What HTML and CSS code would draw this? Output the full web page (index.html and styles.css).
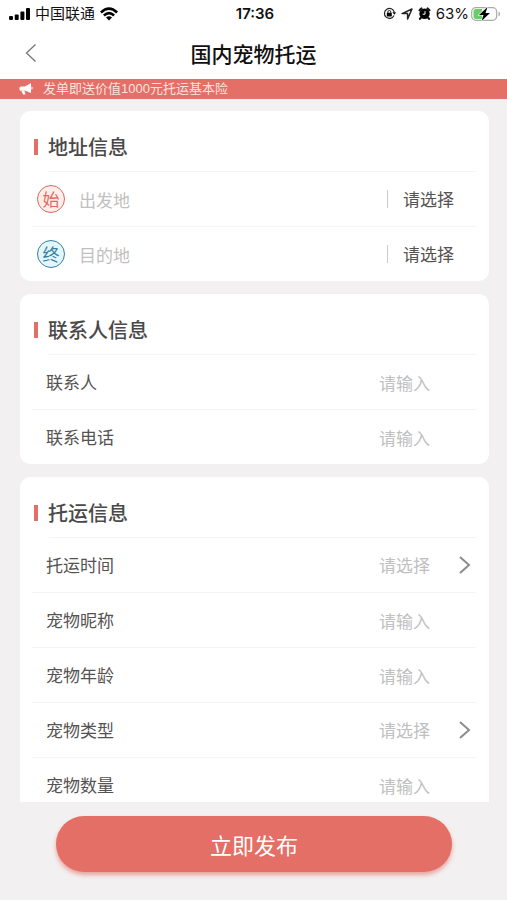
FILE: index.html
```html
<!DOCTYPE html>
<html lang="zh-CN">
<head>
<meta charset="utf-8">
<meta name="viewport" content="width=device-width, initial-scale=1">
<title>国内宠物托运</title>
<link rel="stylesheet" href="styles.css">
</head>
<body>
<header class="top">
  <div class="status">
    <div class="status-side">
      <svg class="icon" width="21" height="14" viewBox="0 0 21 14"><rect x="0" y="9" width="4" height="4" rx="1.200"/><rect x="5.700" y="7.500" width="4" height="5.500" rx="1"/><rect x="11.400" y="4.500" width="4" height="8.500" rx="1"/><rect x="17" y="1" width="4" height="12" rx="1"/></svg>
      <span class="carrier">中国联通</span>
      <svg class="icon" width="18" height="14" viewBox="0 0 18 14"><path d="M0 4.600Q9-4 18 4.600L16.200 6.400Q9-.4 1.800 6.400Z"/><path d="M3 7.600Q9 1.900 15 7.600L13.200 9.400Q9 5.600 4.800 9.400Z"/><path d="M6 10.500Q9 7.900 12 10.500L9 13.500Z"/></svg>
    </div>
    <time class="clock">17:36</time>
    <div class="status-side status-right">
      <svg class="icon" width="13" height="13" viewBox="0 0 13 13"><path d="M11 8.500a5 5 0 1 1 .3-3.300" fill="none" stroke="#222" stroke-width="1.200"/><path d="M9.400 5.300h3.600L11.500 7.800z"/><rect x="3.800" y="5.800" width="5" height="3.600" rx=".6"/><path d="M4.800 6V5a1.500 1.500 0 0 1 3 0v1" fill="none" stroke="#222"/></svg>
      <svg class="icon" width="12" height="12" viewBox="0 0 12 12"><path d="M1 5.600 11 1 6.600 11V5.600z" fill="none" stroke="#222" stroke-width="1.500" stroke-linejoin="round"/></svg>
      <svg class="icon" width="13" height="13" viewBox="0 0 13 13"><circle cx="6.500" cy="6.700" r="5.200"/><path d="M1.600 3.200 3.400 1.500M11.400 3.200 9.600 1.500M3 10.600l-1 1.200M10 10.600l1 1.200" stroke="#111" stroke-width="2.200" stroke-linecap="round"/><path d="M7 4.200v3H4.700" fill="none" stroke="#fff"/></svg>
      <span class="battery">
        <span>63%</span>
        <svg class="icon" width="30" height="16" viewBox="0 0 30 16"><rect x=".7" y="1.700" width="25" height="12.600" rx="4" fill="#fff" stroke="#aaa" stroke-width="1.200"/><path d="M5 3h6v10H5a2.500 2.500 0 0 1-2.500-2.500v-5A2.500 2.500 0 0 1 5 3z" fill="#67ce67"/><path d="M27.500 5.500c2 .8 2 4.200 0 5z" fill="#aaa"/><path d="M16.500 1 8 9h4.500L10.500 15 19 7h-4.500z" stroke="#fff" stroke-width="1.200" paint-order="stroke"/></svg>
      </span>
    </div>
  </div>
  <nav class="nav">
    <button class="back" type="button" aria-label="返回"><svg width="12" height="20" viewBox="0 0 12 20"><path d="M10.500 1.500 1.500 10l9 8.500" fill="none" stroke="#777" stroke-width="1.300"/></svg></button>
    <h1 class="title">国内宠物托运</h1>
  </nav>
</header>
<p class="notice">
  <svg width="14" height="12" viewBox="0 0 14 12" fill="#fff"><path d="M12 0v10L6.500 7.800H2A1.500 1.500 0 0 1 .5 6.300V5A1.500 1.500 0 0 1 2 3.500h4z"/><path d="M2.500 8h3l1 3.500H4z"/><path d="M12.500 3.500a1.700 1.700 0 0 1 0 3.200z"/></svg>
  <span>发单即送价值1000元托运基本险</span>
</p>
<form class="form" id="order">
  <section class="card">
    <h2 class="heading">地址信息</h2>
    <div class="row">
      <label class="badge badge-start" for="from">始</label>
      <input class="field place" id="from" type="text" placeholder="出发地">
      <button class="pick" type="button">请选择</button>
    </div>
    <div class="row">
      <label class="badge badge-end" for="to">终</label>
      <input class="field place" id="to" type="text" placeholder="目的地">
      <button class="pick" type="button">请选择</button>
    </div>
  </section>
  <section class="card">
    <h2 class="heading">联系人信息</h2>
    <div class="row">
      <label class="label" for="contact">联系人</label>
      <input class="field value" id="contact" type="text" placeholder="请输入">
    </div>
    <div class="row">
      <label class="label" for="phone">联系电话</label>
      <input class="field value" id="phone" type="tel" placeholder="请输入">
    </div>
  </section>
  <section class="card">
    <h2 class="heading">托运信息</h2>
    <div class="row">
      <label class="label" for="time">托运时间</label>
      <select class="field value" id="time"><option>请选择</option></select>
      <svg class="arrow" width="12" height="18" viewBox="0 0 12 18"><path d="M1 1l9 8-9 8" fill="none" stroke="#8c8c8c" stroke-width="2"/></svg>
    </div>
    <div class="row">
      <label class="label" for="nickname">宠物昵称</label>
      <input class="field value" id="nickname" type="text" placeholder="请输入">
    </div>
    <div class="row">
      <label class="label" for="age">宠物年龄</label>
      <input class="field value" id="age" type="text" placeholder="请输入">
    </div>
    <div class="row">
      <label class="label" for="kind">宠物类型</label>
      <select class="field value" id="kind"><option>请选择</option></select>
      <svg class="arrow" width="12" height="18" viewBox="0 0 12 18"><path d="M1 1l9 8-9 8" fill="none" stroke="#8c8c8c" stroke-width="2"/></svg>
    </div>
    <div class="row">
      <label class="label" for="count">宠物数量</label>
      <input class="field value" id="count" type="text" placeholder="请输入">
    </div>
  </section>
</form>
<footer class="footer">
  <button class="submit" type="submit" form="order">立即发布</button>
</footer>
</body>
</html>
```
FILE: styles.css
```css
* {
  box-sizing: border-box;
}

body {
  display: flex;
  flex-direction: column;
  height: 100vh;
  margin: 0;
  background: #f2f0f1;
  color: #555252;
  font-family: "Noto Sans CJK SC", sans-serif;
  font-size: 17px;
  line-height: 24px;
}

button,
input,
select {
  margin: 0;
  padding: 0;
  border: 0;
  background: none;
  color: inherit;
  font: inherit;
}

.top {
  flex: none;
  background: #fff;
}

.status {
  display: grid;
  grid-template-columns: 1fr auto 1fr;
  align-items: center;
  height: 27px;
  padding: 0 6px 0 9px;
  color: #111;
  font-family: Inter, "Noto Sans CJK SC", sans-serif;
  font-size: 15px;
}

.status-side {
  display: flex;
  align-items: center;
  gap: 5px;
}

.status-right {
  justify-content: flex-end;
}

.icon {
  flex: none;
}

.clock {
  font-weight: 600;
}

.battery {
  display: flex;
  align-items: center;
  gap: 2px;
}

.nav {
  display: grid;
  grid-template-columns: 56px 1fr 56px;
  align-items: center;
  height: 52px;
}

.back {
  display: flex;
  align-items: center;
  height: 44px;
  padding-left: 25px;
}

.title {
  margin: 0;
  color: #111;
  font-size: 21px;
  font-weight: 500;
  text-align: center;
}

.notice {
  display: flex;
  flex: none;
  align-items: center;
  gap: 10px;
  height: 20px;
  margin: 0;
  padding: 0 19px;
  background: #e36f66;
  color: #fbe3e0;
  font-family: "Liberation Sans", "Noto Sans CJK SC", sans-serif;
  font-size: 13px;
  line-height: 20px;
}

.form {
  display: flex;
  flex: 1;
  flex-direction: column;
  gap: 13px;
  min-height: 0;
  padding: 12px 18px 0 20px;
  overflow-y: auto;
  scrollbar-width: none;
}

.card {
  flex: none;
  padding: 0 13px 0 12px;
  border-radius: 10px;
  background: #fff;
}

.heading {
  display: flex;
  align-items: center;
  gap: 10px;
  height: 60px;
  margin: 0;
  padding: 12px 0 0 2px;
  color: #4a4848;
  font-size: 20px;
  font-weight: 500;
}

.heading::before {
  width: 4px;
  height: 16px;
  background: #e36f66;
  content: "";
}

.row {
  display: flex;
  align-items: center;
  height: 55px;
  border-top: 1px solid #f4f4f4;
}

.heading + .row {
  border-image: linear-gradient(to right, transparent 18px, #f4f4f4 18px) 1;
}

.label {
  flex: 1;
  padding-left: 14px;
}

.field {
  height: 40px;
  outline: 0;
  appearance: none;
}

.value {
  width: 80px;
  margin-right: 17px;
  color: #c0c0c0;
}

.value:has(+ .arrow) {
  margin-right: 0;
}

.field::placeholder {
  color: #c0c0c0;
  opacity: 1;
}

.arrow {
  margin-right: 5px;
}

.badge {
  display: flex;
  flex: none;
  align-items: center;
  justify-content: center;
  width: 28px;
  height: 28px;
  margin-left: 5px;
  border: 1px solid;
  border-radius: 50%;
}

.badge-start {
  background: #fdeeea;
  color: #e0685e;
}

.badge-end {
  background: #e3f6fb;
  color: #35809f;
}

.place {
  flex: 1;
  min-width: 0;
  padding-left: 14px;
}

.pick {
  height: 18px;
  padding: 0 22px 0 15px;
  border-left: 1px solid #ccc;
  line-height: 18px;
}

.footer {
  display: flex;
  flex: none;
  height: 98px;
  padding: 14px 55px 28px 56px;
}

.submit {
  flex: 1;
  border-radius: 28px;
  background: #e36f66;
  box-shadow: 0 3px 4px #e36f6699;
  color: #fff;
  font-size: 22px;
}
```
